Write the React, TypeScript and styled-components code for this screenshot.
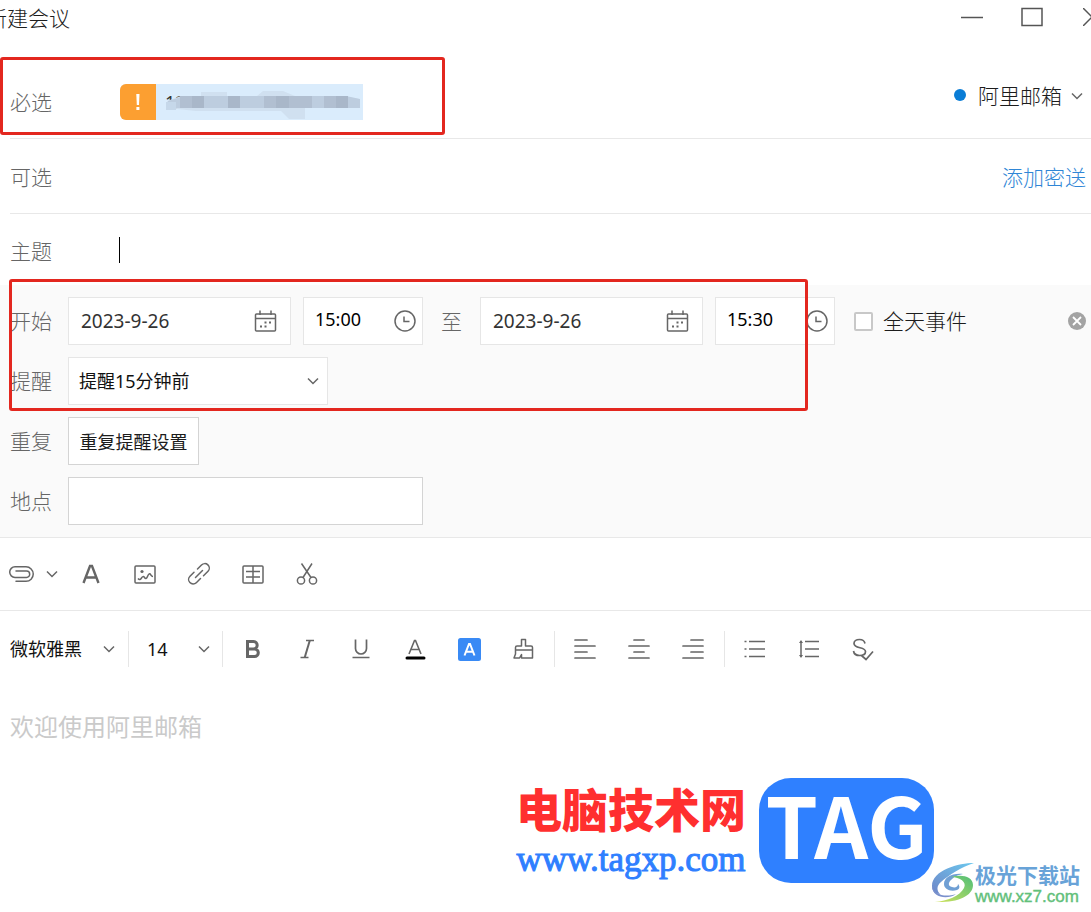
import React from 'react';
import styled, { createGlobalStyle } from 'styled-components';

const Global = createGlobalStyle`
  *, *::before, *::after { box-sizing: border-box; }
  body { margin: 0; background: #fff; }
  body, button, input, select, textarea {
    font-family: 'Noto Sans', 'Noto Sans CJK SC', sans-serif;
    font-weight: 300;
    color: #1c1c1c;
  }
  button, input, select, textarea { border: 0; padding: 0; margin: 0; background: none; outline: none; border-radius: 0; }
  svg { display: block; flex: none; }
`;

const Page = styled.div`
  position: relative;
  display: flex;
  flex-direction: column;
  min-height: 100vh;
  overflow: hidden;
`;

const TitleBar = styled.header`
  display: flex;
  align-items: center;
  justify-content: space-between;
  height: 36px;
  margin: 0 -31px 0 -14px;
`;

const Title = styled.h1`
  margin: 0;
  font-size: 21px;
  line-height: 36px;
  font-weight: 300;
`;

const WindowButtons = styled.div`
  display: flex;
  align-self: flex-start;
`;

const WindowButton = styled.button`
  display: flex;
  align-items: center;
  justify-content: center;
  width: 60px;
  height: 34px;
  color: #555;
`;

const Field = styled.div<{ $tall?: boolean; $last?: boolean }>`
  position: relative;
  display: flex;
  align-items: center;
  height: ${p => (p.$tall ? 103 : p.$last ? 71 : 75)}px;
  padding-top: ${p => (p.$tall ? 30 : 2)}px;
  margin-left: 10px;
  border-bottom: ${p => (p.$last ? 0 : 1)}px solid #e8e8e8;
`;

const Label = styled.label<{ $width: number }>`
  flex: none;
  width: ${p => p.$width}px;
  font-size: 21px;
  line-height: 28px;
  color: #666;
`;

const PlainInput = styled.input`
  flex: 1;
  min-width: 0;
  height: 36px;
  font-size: 18px;
`;

const Chip = styled.div`
  display: flex;
  width: 243px;
  height: 36px;
  background: #daecfc;
  border-radius: 6px 0 0 6px;
  overflow: hidden;
`;

const ChipAlert = styled.span`
  display: flex;
  align-items: center;
  justify-content: center;
  width: 36px;
  background: #fc9f31;
`;

const ChipAddress = styled.span`
  position: relative;
  flex: 1;
  padding-left: 9px;
  font-size: 18px;
  font-weight: 400;
  line-height: 36px;
  color: #333;
`;

const Smudge = styled.svg`
  position: absolute;
  left: 0;
  top: 0;
`;

const Caret = styled.span`
  width: 1px;
  height: 26px;
  margin: 0 0 2px -1px;
  background: #000;
`;

const Account = styled.div`
  display: flex;
  align-items: center;
  padding: 0 8px 12px 0;
`;

const Dot = styled.span`
  width: 12px;
  height: 12px;
  margin: 0 12px 2px 0;
  border-radius: 50%;
  background: #0a7dd6;
`;

const Dropdown = styled.div<{ $width: number; $left?: number; $right?: number; $boxed?: boolean }>`
  position: relative;
  display: flex;
  align-items: center;
  width: ${p => p.$width}px;
  height: ${p => (p.$boxed ? 48 : 36)}px;
  border: ${p => (p.$boxed ? 1 : 0)}px solid #e6e6e6;
  background: #fff;
  select {
    appearance: none;
    width: 100%;
    height: 100%;
    padding-left: ${p => p.$left ?? 0}px;
    color: inherit;
    font-size: inherit;
    font-weight: inherit;
  }
  svg {
    position: absolute;
    right: ${p => p.$right ?? 0}px;
    pointer-events: none;
  }
`;

const AccountDropdown = styled(Dropdown)`
  font-size: 21px;
`;

const TextDropdown = styled(Dropdown)`
  font-size: 18px;
  font-weight: 400;
  color: #111;
`;

const BccLink = styled.a`
  padding-right: 5px;
  font-size: 21px;
  line-height: 28px;
  color: #2f86d6;
  text-decoration: none;
`;

const Panel = styled.section`
  position: relative;
  display: flex;
  flex-direction: column;
  gap: 12px;
  padding: 12px 5px 12px 10px;
  background: #fafafa;
  border-bottom: 1px solid #e8e8e8;
`;

const PanelRow = styled.div`
  display: flex;
  align-items: center;
  height: 48px;
`;

const PickerBox = styled.div<{ $time?: boolean }>`
  display: flex;
  align-items: center;
  flex: none;
  width: ${p => (p.$time ? 120 : 223)}px;
  height: 48px;
  margin-right: ${p => (p.$time ? 0 : 12)}px;
  padding: 0 ${p => (p.$time ? 5 : 12)}px 0 ${p => (p.$time ? 11 : 12)}px;
  border: 1px solid #e6e6e6;
  background: #fff;
  input {
    flex: 1;
    min-width: 0;
    padding-bottom: ${p => (p.$time ? 4 : 0)}px;
    font-size: ${p => (p.$time ? 18 : 19)}px;
    font-weight: 400;
    color: ${p => (p.$time ? '#000' : '#333')};
  }
`;

const Until = styled.span`
  flex: none;
  padding: 0 18px;
  font-size: 21px;
  line-height: 28px;
  color: #666;
`;

const AllDay = styled.label`
  display: flex;
  align-items: center;
  flex: 1;
  gap: 10px;
  padding-left: 19px;
  font-size: 21px;
  line-height: 28px;
  white-space: nowrap;
  input {
    appearance: none;
    width: 19px;
    height: 19px;
    border: 2px solid #c8c8c8;
    border-radius: 2px;
    background: #fff;
  }
`;

const IconButton = styled.button`
  display: flex;
  align-items: center;
  justify-content: center;
`;

const RepeatButton = styled.button`
  width: 131px;
  height: 48px;
  border: 1px solid #d4d4d4;
  background: #fff;
  font-size: 18px;
  font-weight: 400;
`;

const PlaceInput = styled.input`
  width: 355px;
  height: 48px;
  padding: 0 10px;
  border: 1px solid #d4d4d4;
  background: #fff;
  font-size: 18px;
`;

const Toolbar = styled.div<{ $line?: boolean }>`
  display: flex;
  align-items: center;
  height: ${p => (p.$line ? 73 : 76)}px;
  border-bottom: ${p => (p.$line ? 1 : 0)}px solid #e8e8e8;
`;

const AttachButton = styled.button`
  display: flex;
  align-items: center;
  gap: 12px;
  width: 64px;
  height: 36px;
  padding-left: 8px;
`;

const ToolButton = styled.button`
  display: flex;
  align-items: center;
  justify-content: center;
  width: 54px;
  height: 36px;
`;

const ToolGroup = styled.div`
  display: flex;
  height: 36px;
  padding: 0 4px 0 3px;
  border-left: 1px solid #e6e6e6;
`;

const SizeGroup = styled.div`
  border-left: 1px solid #e6e6e6;
`;

const Editor = styled.textarea`
  flex: 1;
  min-height: 225px;
  padding: 22px 10px;
  font-size: 24px;
  font-weight: 400;
  line-height: 36px;
  resize: none;
  &::placeholder { color: #cacaca; opacity: 1; }
`;

const Marker = styled.div<{ $x: number; $y: number; $w: number; $h: number }>`
  position: absolute;
  left: ${p => p.$x}px;
  top: ${p => p.$y}px;
  width: ${p => p.$w}px;
  height: ${p => p.$h}px;
  border: 3px solid #e3271f;
  border-radius: 3px;
  pointer-events: none;
`;

const SiteBrand = styled.div`
  position: absolute;
  right: 157px;
  bottom: 28px;
  display: flex;
  align-items: flex-start;
  gap: 13px;
`;

const SiteText = styled.div`
  display: flex;
  flex-direction: column;
  align-items: center;
  white-space: nowrap;
`;

const SiteName = styled.span`
  font: 900 46px/58px 'Noto Sans CJK SC', sans-serif;
  color: #ff2f2f;
`;

const SiteUrl = styled.span`
  font: 400 35px/48px 'Liberation Serif', serif;
  color: #2f7fff;
  -webkit-text-stroke: 1px #2f7fff;
`;

const Tag = styled.div`
  width: 175px;
  height: 105px;
  border-radius: 32px;
  background: #2f80ff;
  color: #fff;
  font: 700 84px/90px 'Noto Sans CJK SC', sans-serif;
  text-align: center;
`;

const MirrorBrand = styled.div`
  position: absolute;
  right: 11px;
  bottom: 6px;
  display: flex;
  align-items: center;
`;

const MirrorName = styled.div`
  font: 700 21px/26px 'Noto Sans CJK SC', sans-serif;
  color: #68a3d8;
`;

const MirrorUrl = styled.div`
  font: 400 17px/19px 'Liberation Sans', sans-serif;
  color: #62c07a;
  -webkit-text-stroke: 0.4px #62c07a;
`;

const Chevron = () => (
  <svg width="12" height="12" viewBox="0 0 12 12" fill="none" stroke="#666" strokeWidth="1.5">
    <path d="M1 3.5l5 5 5-5" />
  </svg>
);

type IconProps = { children: React.ReactNode; size?: number; width?: number };
const Icon = ({ children, size = 24, width = 1.5 }: IconProps) => (
  <svg width={size} height={size} viewBox="0 0 24 24" fill="none" stroke="#666" strokeWidth={width}>
    {children}
  </svg>
);

const CalendarIcon = () => (
  <Icon>
    <rect x="1.500" y="5" width="20" height="17" rx="1" />
    <path d="M1.500 9.500h20M6 1.500V6M17 1.500V6" />
    <path d="M10.500 13.500h2M15 13.500h2M6 17.500h2M10.500 17.500h2" strokeWidth="2" />
  </Icon>
);

const ClockIcon = () => (
  <Icon>
    <circle cx="12" cy="12" r="10" />
    <path d="M11 7.500v5h5.500" />
  </Icon>
);

const lines = (rows: [number, number, number][]) => (
  <Icon width={1.7}>
    <path strokeLinecap="round" d={rows.map(([y, a, b]) => `M${a} ${y}H${b}`).join('')} />
  </Icon>
);

export default function App() {
  return (
    <Page>
      <Global />
      <TitleBar>
        <Title>新建会议</Title>
        <WindowButtons>
          <WindowButton aria-label="最小化">
            <svg width="22" height="22" stroke="currentColor" strokeWidth="1.500"><path d="M0 11.500h22" /></svg>
          </WindowButton>
          <WindowButton aria-label="最大化">
            <svg width="22" height="22" fill="none" stroke="currentColor" strokeWidth="1.500"><rect x="1" y="2.500" width="20" height="17" /></svg>
          </WindowButton>
          <WindowButton aria-label="关闭">
            <svg width="18" height="18" stroke="currentColor" strokeWidth="1.500"><path d="M0 0l18 18M18 0L0 18" /></svg>
          </WindowButton>
        </WindowButtons>
      </TitleBar>

      <Field $tall>
        <Label $width={110} htmlFor="required">必选</Label>
        <Chip>
          <ChipAlert>
            <svg width="6" height="18" fill="#fff"><path d="M1.300 1h3.200l-.5 11H1.800z" /><rect x="1.400" y="14" width="3" height="3" /></svg>
          </ChipAlert>
          <ChipAddress>
            13
            <Smudge width="207" height="36">
              <path d="M11 17l14-5h20v-4h26v4h30l6-5h20l12 5h48l16 3v9h-54v11h-16l-8-8H40l-28-3z" fill="#d0e0f0" />
              <path d="M12 17l16-5h162l14 3v9H12z" fill="#bdcddf" />
              <path d="M10 18h10v8H10z" fill="#c6d8ea" />
              <g fill="#a9b7c9">
                <rect x="36" y="12" width="12" height="12" />
                <rect x="72" y="12" width="12" height="12" />
                <rect x="120" y="12" width="13" height="12" />
                <rect x="180" y="12" width="12" height="12" />
              </g>
              <g fill="#b1bfd1">
                <rect x="24" y="12" width="12" height="12" />
                <rect x="108" y="12" width="12" height="12" />
                <rect x="133" y="12" width="23" height="12" />
                <rect x="168" y="12" width="12" height="12" />
              </g>
            </Smudge>
          </ChipAddress>
        </Chip>
        <PlainInput id="required" />
        <Account>
          <Dot />
          <AccountDropdown $width={105}>
            <select aria-label="发件账号"><option>阿里邮箱</option></select>
            <Chevron />
          </AccountDropdown>
        </Account>
        <Marker $x={-10} $y={21} $w={445} $h={78} />
      </Field>

      <Field>
        <Label $width={110} htmlFor="optional">可选</Label>
        <PlainInput id="optional" />
        <BccLink href="#bcc">添加密送</BccLink>
      </Field>

      <Field $last>
        <Label $width={110} htmlFor="subject">主题</Label>
        <Caret />
        <PlainInput id="subject" />
      </Field>

      <Panel>
        <PanelRow>
          <Label $width={58} htmlFor="start">开始</Label>
          <PickerBox>
            <input id="start" defaultValue="2023-9-26" />
            <CalendarIcon />
          </PickerBox>
          <PickerBox $time>
            <input aria-label="开始时间" defaultValue="15:00" />
            <ClockIcon />
          </PickerBox>
          <Until>至</Until>
          <PickerBox>
            <input aria-label="结束日期" defaultValue="2023-9-26" />
            <CalendarIcon />
          </PickerBox>
          <PickerBox $time>
            <input aria-label="结束时间" defaultValue="15:30" />
            <ClockIcon />
          </PickerBox>
          <AllDay>
            <input type="checkbox" />
            全天事件
          </AllDay>
          <IconButton aria-label="移除时间">
            <svg width="18" height="18" stroke="#fff" strokeWidth="1.800"><circle cx="9" cy="9" r="9" fill="#a3a3a3" stroke="none" /><path d="M5 5l8 8M13 5l-8 8" /></svg>
          </IconButton>
        </PanelRow>
        <PanelRow>
          <Label $width={58} htmlFor="remind">提醒</Label>
          <TextDropdown $width={260} $left={10} $right={8} $boxed>
            <select id="remind"><option>提醒15分钟前</option></select>
            <Chevron />
          </TextDropdown>
        </PanelRow>
        <PanelRow>
          <Label as="span" $width={58}>重复</Label>
          <RepeatButton>重复提醒设置</RepeatButton>
        </PanelRow>
        <PanelRow>
          <Label $width={58} htmlFor="place">地点</Label>
          <PlaceInput id="place" />
        </PanelRow>
        <Marker $x={9} $y={-6} $w={799} $h={132} />
      </Panel>

      <Toolbar $line>
        <AttachButton aria-label="附件">
          <svg width="26" height="18" viewBox="0 0 26 18" fill="none" stroke="#666" strokeWidth="1.500" strokeLinecap="round">
            <path d="M8 6h10.500a3.200 3.200 0 0 1 0 6.400H7a5.300 5.300 0 0 1 0-10.600h11a7 7 0 0 1 0 14.500H8" />
          </svg>
          <Chevron />
        </AttachButton>
        <ToolButton aria-label="文字格式">
          <Icon width={2.4}><path d="M4.500 21L11 4h2l6.500 17M7 15.500h10" /></Icon>
        </ToolButton>
        <ToolButton aria-label="图片">
          <Icon>
            <rect x="2" y="4" width="20" height="17" rx="1" />
            <path d="M5 16.500c1.500 2 2.500 1 3.500-.5s2-2 3-.5 2 1.500 3-1 2-3.500 3-2 1 2 2.500 2" />
            <circle cx="9" cy="9.500" r="1.600" fill="#666" stroke="none" />
          </Icon>
        </ToolButton>
        <ToolButton aria-label="链接">
          <Icon>
            <path strokeLinecap="round" d="M8.500 15.500l7-7M10.500 7l4-4a4.500 4.500 0 0 1 6.500 6.300l-4.500 4.500M7 10.200l-4 4a4.500 4.500 0 0 0 6.300 6.500l4.200-4.200" />
          </Icon>
        </ToolButton>
        <ToolButton aria-label="表格">
          <Icon><rect x="2" y="4" width="20" height="17" rx="1" /><path d="M12 4v17M5 9.500h14M5 15h14" /></Icon>
        </ToolButton>
        <ToolButton aria-label="剪切">
          <Icon><path d="M6.500 1.500l9.500 14M17 1.500L8 15.500" /><circle cx="6" cy="18.500" r="3.600" /><circle cx="18" cy="18.500" r="3.600" /></Icon>
        </ToolButton>
      </Toolbar>

      <Toolbar>
        <TextDropdown $width={128} $left={10} $right={13}>
          <select aria-label="字体"><option>微软雅黑</option></select>
          <Chevron />
        </TextDropdown>
        <SizeGroup>
          <TextDropdown $width={93} $left={18} $right={12}>
            <select aria-label="字号"><option>14</option></select>
            <Chevron />
          </TextDropdown>
        </SizeGroup>
        <ToolGroup>
          <ToolButton aria-label="加粗">
            <Icon width={3}><path d="M6.500 4.500h6a3.700 3.700 0 0 1 0 7.400h-6zM6.500 11.900h7a3.800 3.800 0 0 1 0 7.600h-7z" /></Icon>
          </ToolButton>
          <ToolButton aria-label="斜体">
            <Icon width={1.3}><path d="M11 3.500h8M5.500 20.500h8" /><path d="M14.800 3.500L9.700 20.500" strokeWidth="2" /></Icon>
          </ToolButton>
          <ToolButton aria-label="下划线">
            <Icon width={1.7}><path d="M6.500 2.500v9a5.500 5.500 0 0 0 11 0v-9M3.500 20.500h17" /></Icon>
          </ToolButton>
          <ToolButton aria-label="文字颜色">
            <Icon width={1.6}><path d="M6 17l5.500-13.500h1L18 17M8 12.500h8" /><path d="M4 21h17" stroke="#000" strokeWidth="3" strokeLinecap="round" /></Icon>
          </ToolButton>
          <ToolButton aria-label="背景颜色">
            <Icon width={2}><rect x="1" y="1" width="23" height="23" rx="2.500" fill="#398af5" stroke="none" /><path d="M7.500 18.500l4.500-11.500h1l4.500 11.500M9 14.800h7" stroke="#fff" /></Icon>
          </ToolButton>
          <ToolButton aria-label="格式刷">
            <Icon><path strokeLinejoin="round" d="M10.500 2.500h4V9h5.500a1.500 1.500 0 0 1 1.500 1.500V21H10.500v-3.500L8.500 21H3l1.500-4v-6.500A1.500 1.500 0 0 1 6 9h4.500zM4.500 13h17" /></Icon>
          </ToolButton>
        </ToolGroup>
        <ToolGroup>
          <ToolButton aria-label="左对齐">{lines([[3, 2, 14], [9, 2, 22], [15, 2, 14], [21, 2, 22]])}</ToolButton>
          <ToolButton aria-label="居中">{lines([[3, 7, 17], [9, 2, 22], [15, 7, 17], [21, 2, 22]])}</ToolButton>
          <ToolButton aria-label="右对齐">{lines([[3, 10, 22], [9, 2, 22], [15, 10, 22], [21, 2, 22]])}</ToolButton>
        </ToolGroup>
        <ToolGroup>
          <ToolButton aria-label="列表">
            <Icon width={1.7}><path d="M6 4.500h16M6 12h16M6 19.500h16M1.500 4.500h2M1.500 12h2M1.500 19.500h2" /></Icon>
          </ToolButton>
          <ToolButton aria-label="行距">
            <Icon><path d="M8 4.500h14M8 12h14M8 19.500h14M4 4.500v15" /><path d="M4 3l2 3H2zM4 21l2-3H2z" fill="#666" stroke="none" /></Icon>
          </ToolButton>
          <ToolButton aria-label="拼写检查">
            <Icon width={1.7}><path d="M14 6.500c-.5-2.500-2.500-4-5.500-4-3.500 0-5.500 1.800-5.500 4 0 5.500 11.500 3 11.500 8 0 2.500-2.500 4-5.800 4-3.500 0-5.700-1.500-6.200-4.500M10.500 18.500l4.500 4 7-8" /></Icon>
          </ToolButton>
        </ToolGroup>
      </Toolbar>

      <Editor aria-label="正文" placeholder="欢迎使用阿里邮箱" />

      <SiteBrand>
        <SiteText>
          <SiteName>电脑技术网</SiteName>
          <SiteUrl>www.tagxp.com</SiteUrl>
        </SiteText>
        <Tag>TAG</Tag>
      </SiteBrand>

      <MirrorBrand>
        <svg width="44" height="44" viewBox="0 0 44 44">
          <defs>
            <linearGradient id="blue" x1="0" y1="1" x2="1" y2="0"><stop offset="0" stopColor="#6f86c8" /><stop offset="1" stopColor="#6cc8ee" /></linearGradient>
            <linearGradient id="green" x1="0" y1="1" x2="1" y2="0"><stop offset="0" stopColor="#d3e35c" /><stop offset="1" stopColor="#4fbe78" /></linearGradient>
          </defs>
          <path d="M43 1C28 1 1 8 1 24c0 5 3 8 8 8-3-3-4-8 1-12C18 13 30 5 43 1z" fill="url(#blue)" />
          <path d="M32 12c-12-1-19 4-19 10 0 5 6 8 13 6 3-1 3-4 1-6 0 3-3 4-6 3-4-1-4-4-1-7 3-3 6-5 12-6z" fill="#6f9fd4" />
          <path d="M20 15c10-3 22-1 22 8 0 12-18 18-38 17 12-1 25-6 29-14 3-6-4-11-13-11z" fill="url(#green)" />
          <path d="M1 24c2 8 12 12 24 8-8 6-24 4-24-8z" fill="#7a90cc" />
        </svg>
        <div>
          <MirrorName>极光下载站</MirrorName>
          <MirrorUrl>www.xz7.com</MirrorUrl>
        </div>
      </MirrorBrand>
    </Page>
  );
}
